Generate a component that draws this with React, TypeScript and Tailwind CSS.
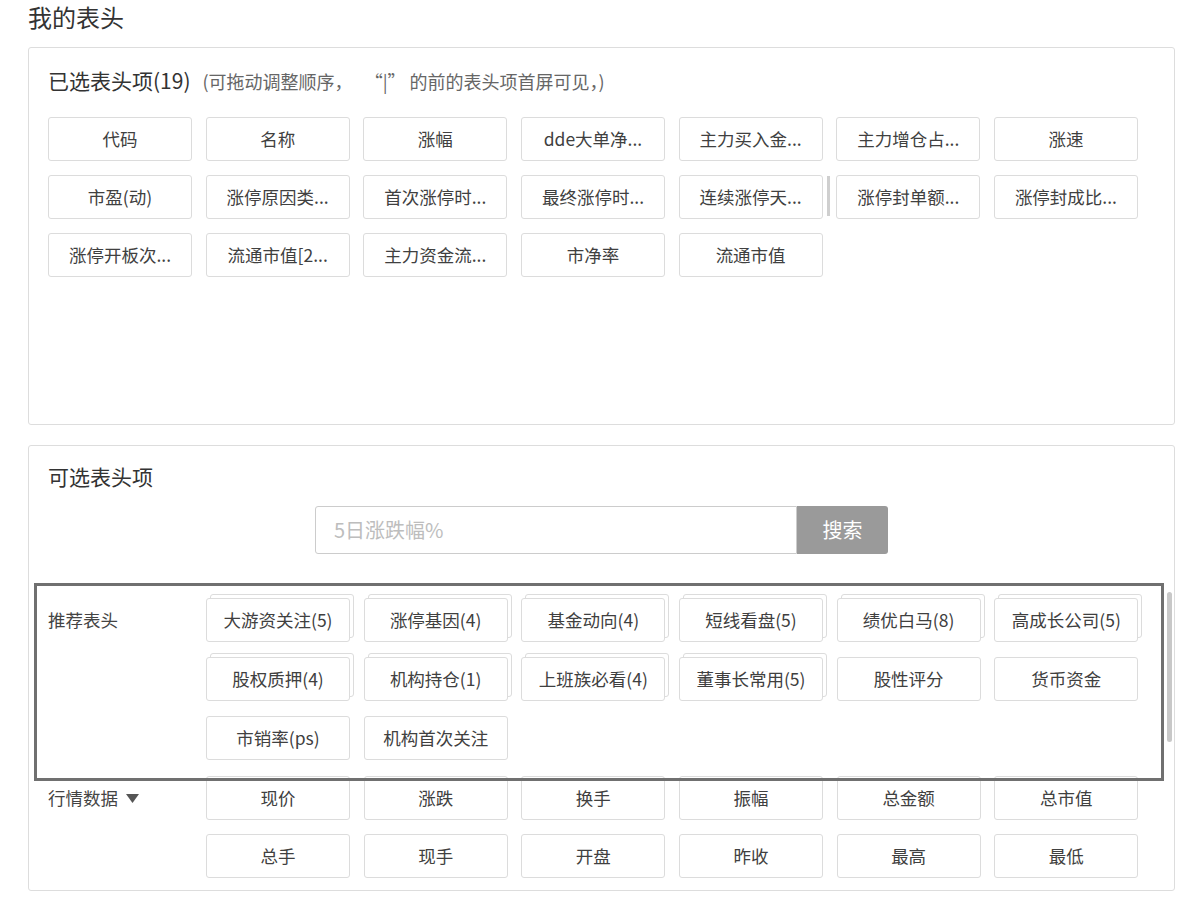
import React from 'react';

const selected: string[] = [
    '代码', '名称', '涨幅', 'dde大单净...', '主力买入金...', '主力增仓占...', '涨速',
    '市盈(动)', '涨停原因类...', '首次涨停时...', '最终涨停时...', '连续涨停天...', '涨停封单额...', '涨停封成比...',
    '涨停开板次...', '流通市值[2...', '主力资金流...', '市净率', '流通市值',
];

const recommended: { name: string; stacked: boolean }[] = [
    { name: '大游资关注(5)', stacked: true },
    { name: '涨停基因(4)', stacked: true },
    { name: '基金动向(4)', stacked: true },
    { name: '短线看盘(5)', stacked: true },
    { name: '绩优白马(8)', stacked: true },
    { name: '高成长公司(5)', stacked: true },
    { name: '股权质押(4)', stacked: true },
    { name: '机构持仓(1)', stacked: true },
    { name: '上班族必看(4)', stacked: true },
    { name: '董事长常用(5)', stacked: true },
    { name: '股性评分', stacked: false },
    { name: '货币资金', stacked: false },
    { name: '市销率(ps)', stacked: false },
    { name: '机构首次关注', stacked: false },
];

const market: string[] = ['现价', '涨跌', '换手', '振幅', '总金额', '总市值', '总手', '现手', '开盘', '昨收', '最高', '最低'];

const Chip = ({ label, stacked = false, divider = false }: { label: string; stacked?: boolean; divider?: boolean }) => (
    <div className="relative h-[44px]">
        {stacked && (
            <div className="absolute inset-0 translate-x-[4px] -translate-y-[4px] rounded-[3px] border border-[#dcdcdc] bg-white" />
        )}
        {divider && <span className="absolute -left-[9px] top-[1px] bottom-[3px] w-[3px] bg-[#cfcfcf]" />}
        <div className="relative flex h-full items-center justify-center whitespace-nowrap rounded-[3px] border border-[#dcdcdc] bg-white text-[17.5px] text-[#404040]">
            {label}
        </div>
    </div>
);

export default function App() {
    return (
        <div
            className="h-[900px] w-[1200px] bg-white text-[#333]"
            style={{ fontFamily: '"Noto Sans CJK SC", "Microsoft YaHei", sans-serif' }}
        >
            <div className="h-[34px] pl-[28px] text-[24px] leading-[34px] text-[#333]">我的表头</div>

            {/* selected columns */}
            <div className="ml-[28px] mt-[13px] h-[378px] w-[1147px] rounded-[3px] border border-[#dddddd] pl-[19px] pt-[18px]">
                <div className="flex h-[30px] items-center">
                    <span className="text-[21px] text-[#333]">已选表头项(19)</span>
                    <span className="ml-[12px] text-[18px] text-[#666]">
                        (可拖动调整顺序，&nbsp;&nbsp;&nbsp;“|” 的前的表头项首屏可见，)
                    </span>
                </div>
                <div className="mt-[21px] grid grid-cols-[repeat(7,144px)] gap-x-[13.67px] gap-y-[14px]">
                    {selected.map((s, i) => (
                        <Chip key={i} label={s} divider={i === 12} />
                    ))}
                </div>
            </div>

            {/* optional columns */}
            <div className="relative ml-[28px] mt-[20px] h-[446px] w-[1147px] rounded-[3px] border border-[#dddddd] pl-[19px] pt-[16px]">
                <div className="flex h-[30px] items-center text-[21px] text-[#333]">可选表头项</div>
                <div className="mt-[14px] flex justify-center pr-[19px]">
                    <div className="flex h-[48px] w-[482px] items-center rounded-l-[3px] border border-[#cccccc] pl-[18px] text-[20px] text-[#bdbdbd]">
                        5日涨跌幅%
                    </div>
                    <div className="flex h-[48px] w-[91px] items-center justify-center rounded-r-[3px] bg-[#9a9a9a] text-[20px] text-white">
                        搜索
                    </div>
                </div>

                <div className="mt-[44px] flex">
                    <div className="w-[158px] text-[17.5px] leading-[44px] text-[#444]">推荐表头</div>
                    <div className="grid grid-cols-[repeat(6,144px)] gap-x-[13.67px] gap-y-[15px]">
                        {recommended.map((r) => (
                            <Chip key={r.name} label={r.name} stacked={r.stacked} />
                        ))}
                    </div>
                </div>

                <div className="mt-[16px] flex">
                    <div className="flex h-[44px] w-[158px] items-center text-[17.5px] text-[#444]">
                        行情数据
                        <svg className="ml-[8px]" width="13" height="9" viewBox="0 0 13 9">
                            <path d="M0 0 L13 0 L6.5 9 Z" fill="#555" />
                        </svg>
                    </div>
                    <div className="grid grid-cols-[repeat(6,144px)] gap-x-[13.67px] gap-y-[14px]">
                        {market.map((m) => (
                            <Chip key={m} label={m} />
                        ))}
                    </div>
                </div>

                {/* highlight frame over recommended section */}
                <div className="pointer-events-none absolute left-[5px] top-[137px] h-[198px] w-[1130px] border-[3px] border-[#707070]" />
                {/* scrollbar */}
                <div className="absolute right-[2px] top-[146px] h-[150px] w-[5px] rounded-full bg-[#c8c8c8]" />
            </div>
        </div>
    );
}
